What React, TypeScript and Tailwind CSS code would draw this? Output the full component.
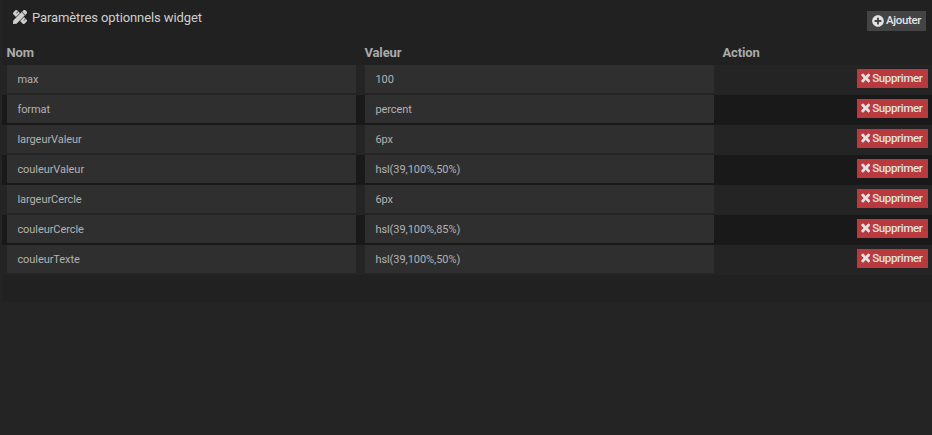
import React from "react";
import { FaPencilRuler, FaPlusCircle, FaTimes } from "react-icons/fa";

const params = [
  { name: "max", value: "100" },
  { name: "format", value: "percent" },
  { name: "largeurValeur", value: "6px" },
  { name: "couleurValeur", value: "hsl(39,100%,50%)" },
  { name: "largeurCercle", value: "6px" },
  { name: "couleurCercle", value: "hsl(39,100%,85%)" },
  { name: "couleurTexte", value: "hsl(39,100%,50%)" },
];

const grid = "grid grid-cols-[349px_349px_1fr] gap-x-[9px] pl-[5px] pr-1";

function Field({ text }: { text: string }) {
  return (
    <div className="h-7 bg-[#2f2f2f] pt-[6px] pl-[10.4px] text-[11px] leading-[17px] tracking-[-0.06px] text-[#b2b2b2]">
      {text}
    </div>
  );
}

export default function App() {
  return (
    <div className="h-[435px] w-[932px] overflow-hidden bg-[#242424] pl-[2px] font-['Roboto',sans-serif]">
      <section className="h-[302px] bg-[#212121]">
        <header className="flex h-[43px] items-start justify-between pr-[6px] pl-[11px]">
          <h1 className="flex items-center gap-[5px] pt-[8px] text-[13px] leading-[19px] tracking-[-0.1px] text-[#cfcfcf]">
            <FaPencilRuler size={14} className="-mt-px" stroke="currentColor" strokeWidth={16} />
            <span>Paramètres optionnels widget</span>
          </h1>
          <button className="mt-[11px] flex h-5 w-[59px] items-center gap-[2px] bg-[#444444] pl-[5px] text-[11.5px] font-medium tracking-[-0.35px] text-[#e3e3e3]">
            <FaPlusCircle size={12} className="-mt-px shrink-0" />
            <span>Ajouter</span>
          </button>
        </header>
        <div className={`${grid} h-[22px] text-[13px] leading-[19px] font-bold tracking-[-0.15px] text-[#aaaaaa]`}>
          <span className="-ml-[0.5px]">Nom</span>
          <span className="-ml-[0.5px]">Valeur</span>
          <span className="-ml-[0.5px]">Action</span>
        </div>
        <div>
          {params.map((p) => (
            <div key={p.name} className={`${grid} h-[30px] odd:bg-[#242424] even:bg-[#191919]`}>
              <Field text={p.name} />
              <Field text={p.value} />
              <div className="flex justify-end pt-1">
                <button className="flex h-[19px] w-[71px] items-start gap-[2px] bg-[#b93a3e] pl-1 text-[11.5px] leading-[19px] font-medium tracking-[-0.35px] text-[#e3e3e3]">
                  <FaTimes size={12} className="mt-[3px] -ml-[0.3px] w-[9.5px] shrink-0" stroke="currentColor" strokeWidth={36} />
                  <span>Supprimer</span>
                </button>
              </div>
            </div>
          ))}
        </div>
      </section>
    </div>
  );
}
